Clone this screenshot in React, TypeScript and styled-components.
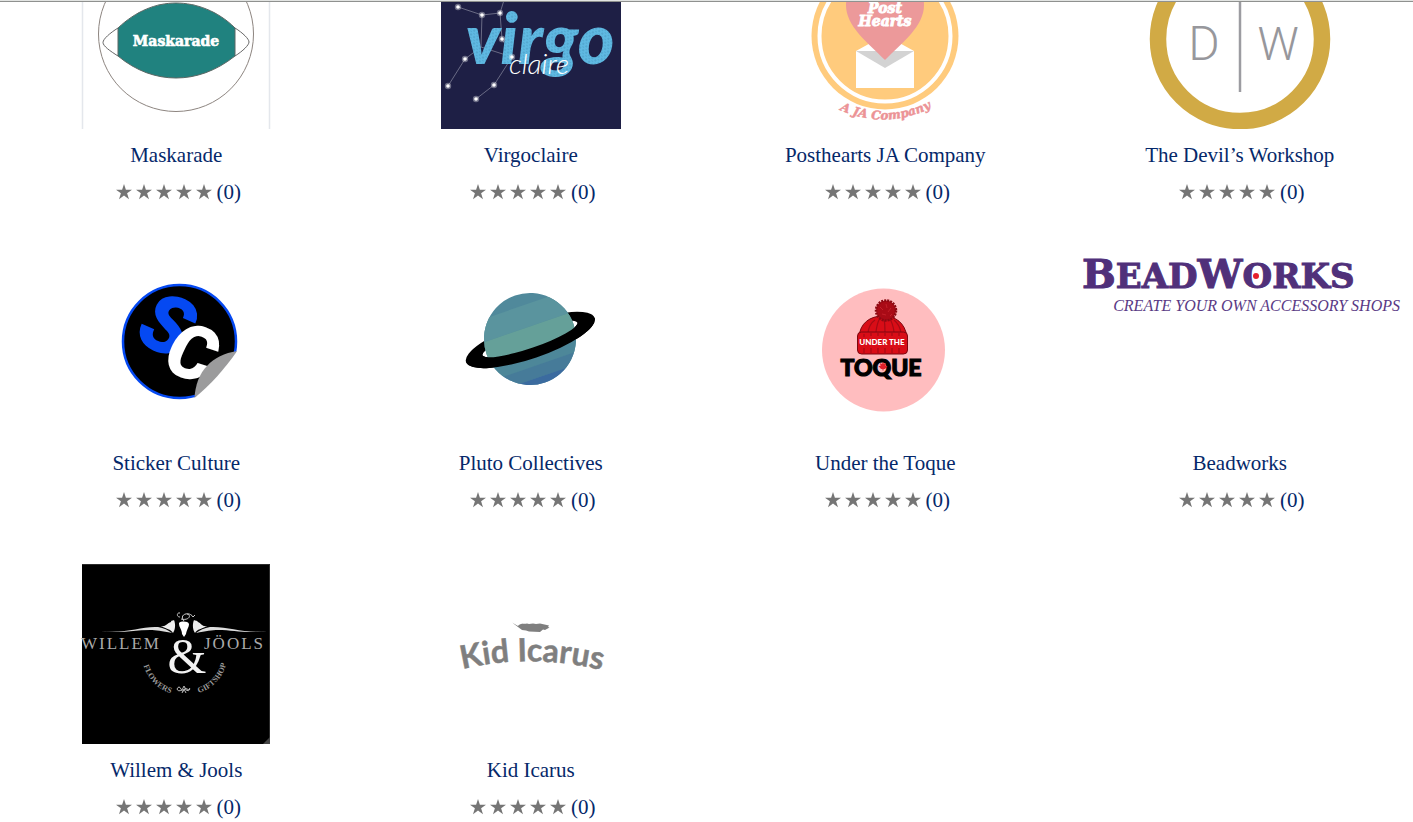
import React from "react";
import styled, { createGlobalStyle } from "styled-components";

const GlobalStyle = createGlobalStyle`
  * { box-sizing: border-box; }
  body {
    margin: 0;
    background: #ffffff;
    color: #05286a;
    font-family: "Liberation Serif", "Times New Roman", serif;
  }
`;

const Page = styled.div`
  overflow: hidden;
`;

const TopEdge = styled.header`
  height: 2px;
  background: #e2e4e2;
  border-bottom: 1px solid #8f918f;
`;

const Viewport = styled.main`
  overflow: hidden;
`;

/* The list is scrolled, so its first row starts above the visible area. */
const VendorGrid = styled.ul`
  display: grid;
  grid-template-columns: repeat(4, minmax(0, 1fr));
  grid-template-rows: minmax(308px, auto) minmax(307px, auto) auto;
  margin: -53px -4px 0 -1px;
  padding: 0;
  list-style: none;
`;

const Vendor = styled.li`
  display: flex;
  flex-direction: column;
  align-items: center;
`;

const VendorLink = styled.a`
  display: flex;
  flex-direction: column;
  align-items: center;
  gap: 11px;
  color: inherit;
  text-decoration: none;
`;

const Art = styled.svg`
  display: block;
  width: 336px;
  height: 180px;
`;

const Name = styled.span`
  font-size: 21px;
  line-height: 30px;
`;

const Rating = styled.div`
  display: flex;
  align-items: center;
  gap: 5px;
  margin-top: 7px;
  padding-left: 4px;
  font-size: 21px;
  line-height: 30px;
`;

const Stars = styled.span`
  display: flex;
  gap: 4px;
`;

const StarIcon = styled.svg`
  width: 16px;
  height: 16px;
  fill: #757575;
`;

const serifBlack = '"DejaVu Serif", serif';
const serif = '"Liberation Serif", serif';

const Logo = ({ title, children }: { title: string; children: React.ReactNode }) => (
  <Art viewBox="-168 0 336 180" role="img" aria-label={title}>
    {children}
  </Art>
);

const Maskarade = () => (
  <Logo title="Maskarade logo">
    <path d="M-93.500 0V180M93.500 0V180" stroke="#e4e7ec" strokeWidth="1.500" />
    <circle cx="0" cy="85" r="77.500" fill="#fff" stroke="#8d8580" />
    <path d="M-58 79C-66 84-73 90-73 93.500S-66 102-58 107M59 79C67 84 73 90 73 93S67 102 59 107" fill="none" stroke="#666" />
    <path d="M-58 79C-40 62-20 54 0 54S42 62 59 79V107C40 122 20 129 0 129S-40 122-58 107Z" fill="#20827f" stroke="#5b6764" />
    <text x="0" y="97" textAnchor="middle" fontFamily={serifBlack} fontWeight="700" fontSize="14" fill="#fff" stroke="#fff" strokeWidth="0.600">Maskarade</text>
  </Logo>
);

const starNodes = [[-73, 58], [-49, 66], [-31, 64], [-29, 90], [-66, 110], [-83, 137], [-19, 108], [-37, 136], [-55, 150]];

const Virgoclaire = () => (
  <Logo title="Virgoclaire logo">
    <defs>
      <pattern id="brush" width="5" height="4" patternUnits="userSpaceOnUse" patternTransform="rotate(-50)">
        <rect width="5" height="4" fill="#5fb9e2" />
        <path d="M0 1h2M3 3h1" stroke="#397fa8" strokeWidth="0.600" />
      </pattern>
    </defs>
    <rect x="-90" width="180" height="180" fill="#1e1f45" />
    <path d="M-73 58L-49 66L-31 64L-26 48M-49 66L-50 98L-19 108M-31 64L-29 90L-19 108L-37 136L-55 150M-50 98L-66 110L-83 137" fill="none" stroke="#7c7d94" strokeWidth="0.800" />
    <text x="9" y="115" textAnchor="middle" fontFamily="Lato, sans-serif" fontWeight="900" fontStyle="italic" fontSize="70" fill="url(#brush)">virgo</text>
    {starNodes.map(([x, y]) => (
      <g key={`${x},${y}`} fill="#fff">
        <circle cx={x} cy={y} r="3.200" opacity="0.350" />
        <circle cx={x} cy={y} r="1.800" />
      </g>
    ))}
    <text x="8" y="125" textAnchor="middle" fontFamily="Lato, sans-serif" fontWeight="300" fontStyle="italic" fontSize="28" fill="#fff">claire</text>
  </Logo>
);

const Posthearts = () => (
  <Logo title="Posthearts JA Company logo">
    <circle cx="0" cy="87" r="73.500" fill="#ffcb7d" />
    <circle cx="0" cy="87" r="65.500" fill="none" stroke="#fff" strokeWidth="4" />
    <path d="M-29 102L0 86L29 102V139H-29Z" fill="#fff" />
    <path d="M-29 102H29L0 119Z" fill="#d3d3d3" />
    <path d="M0 111C-18 93-39 77-39 56C-39 34-12 28 0 44C12 28 39 34 39 56C39 77 18 93 0 111Z" fill="#ec999a" />
    <g fontFamily={serifBlack} fontWeight="700" fontStyle="italic" fill="#fff" stroke="#fff" strokeWidth="0.900" fontSize="14" textAnchor="middle">
      <text x="0" y="64">Post</text>
      <text x="0" y="77">Hearts</text>
    </g>
    <path id="hearts-curve" d="M-45 161Q0 181 46 159" fill="none" />
    <text fontFamily={serifBlack} fontWeight="700" fontStyle="italic" fontSize="12" fill="#ec9396" stroke="#ec9396" strokeWidth="0.500" textAnchor="middle">
      <textPath href="#hearts-curve" startOffset="50%">A JA Company</textPath>
    </text>
  </Logo>
);

const DevilsWorkshop = () => (
  <Logo title="The Devil’s Workshop logo">
    <circle cx="0" cy="90" r="82" fill="#fff" stroke="#d1aa45" strokeWidth="16.500" />
    <path d="M0 30V143" stroke="#9c9ca1" strokeWidth="2.500" />
    <g fontFamily="Roboto, sans-serif" fontWeight="300" fill="#97979c" textAnchor="middle">
      <text x="-36" y="111" fontSize="48">D</text>
      <text x="38" y="111" fontSize="46">W</text>
    </g>
  </Logo>
);

const StickerCulture = () => (
  <Logo title="Sticker Culture logo">
    <circle cx="3.500" cy="84.500" r="56.500" fill="#000" stroke="#0549f2" strokeWidth="2.500" />
    <g fontFamily="Roboto, sans-serif" fontWeight="900" fontStyle="italic" fontSize="82" textAnchor="middle">
      <text transform="translate(-9 68) rotate(24)" y="28" fill="#0549f2">S</text>
      <text transform="translate(16 95) rotate(18)" y="27" fontSize="76" fill="#fff">C</text>
    </g>
    <path d="M62 93L64 150H17L18.500 141Z" fill="#fff" />
    <path d="M61 94C36 98 20 114 18.500 141C34 128 49 112 61 94Z" fill="#9b9b9c" />
  </Logo>
);

const ringPath = "M-68 0A68 18.500 0 1 0 68 0A68 18.500 0 1 0-68 0ZM-50-1A50 9 0 1 1 50-1A50 9 0 1 1-50-1Z";

const PlutoCollectives = () => (
  <Logo title="Pluto Collectives logo">
    <defs>
      <clipPath id="planet"><circle r="46" /></clipPath>
      <clipPath id="front"><rect x="-70" y="0" width="140" height="24" /></clipPath>
    </defs>
    <g transform="translate(-1 82) rotate(-19)">
      <g transform="translate(0 1)">
        <path d={ringPath} fillRule="evenodd" />
      </g>
      <g clipPath="url(#planet)">
        <rect x="-50" y="-50" width="100" height="100" fill="#50899b" />
        <rect x="-50" y="-34" width="100" height="22" fill="#5a949e" />
        <rect x="-50" y="-12" width="100" height="26" fill="#65a099" />
        <rect x="-50" y="14" width="100" height="13" fill="#4d8799" />
        <rect x="-50" y="27" width="100" height="12" fill="#467b99" />
        <rect x="-50" y="39" width="100" height="12" fill="#3b6b9f" />
      </g>
      <g transform="translate(0 1)">
        <path d={ringPath} fillRule="evenodd" clipPath="url(#front)" />
      </g>
    </g>
  </Logo>
);

const UnderTheToque = () => (
  <Logo title="Under the Toque logo">
    <circle cx="-1.500" cy="93" r="61.500" fill="#ffbdbf" />
    <path d="M-26 80C-25 66-15 59-2 59S20 66 22 80Z" fill="#d90d17" stroke="#7c0710" />
    <path d="M-17 76Q-16 67-10 63M-9 75Q-8 66-5 61M0 75Q0 67-1 61M9 75Q8 66 4 61M16 76Q15 68 9 63" fill="none" stroke="#a50a14" strokeWidth="1.200" />
    <circle cx="1" cy="53.500" r="10" fill="#a90b16" stroke="#8b0912" strokeWidth="2.500" strokeDasharray="2 1" />
    <path d="M-5 50L-2 53M1 47L2 51M6 51L3 55M-3 57L1 58M5 59L7 57" stroke="#c41f29" />
    <rect x="-27.500" y="75" width="50" height="22" rx="4" fill="#d90d17" stroke="#7c0710" />
    <path d="M-21 77V80M-14 76V79M-7 76V79M0 76V79M7 76V79M14 76V79M-21 91V96M-14 91V96M-7 91V96M0 91V96M7 91V96M14 91V96" stroke="#a50a14" strokeWidth="1.200" />
    <text x="-3" y="88" textAnchor="middle" fontFamily="Lato, sans-serif" fontWeight="900" fontSize="8" fill="#fff">UNDER THE</text>
    <text x="-4" y="119" textAnchor="middle" fontFamily="Lato, sans-serif" fontWeight="900" fontSize="23" stroke="#000" strokeWidth="1.200">TOQUE</text>
    <path d="M-2 105L-1 107L1 106L0.500 109L2.500 109L0 112H-1.500V113.500H-2.500V112H-4L-6.500 109L-4.500 109L-5 106L-3 107Z" fill="#e0202a" />
  </Logo>
);

const Beadworks = () => (
  <Logo title="Beadworks logo">
    <text x="-158" y="31" fontFamily={serifBlack} fontWeight="700" fontSize="40" fill="#50307a" stroke="#50307a" strokeWidth="1">
      B<tspan fontSize="34">EAD</tspan>W<tspan fontSize="34">ORKS</tspan>
    </text>
    <circle cx="16" cy="19" r="3" fill="#e5202c" />
    <text x="160" y="54" textAnchor="end" fontFamily={serif} fontStyle="italic" fontSize="16" fill="#5a3a85">CREATE YOUR OWN ACCESSORY SHOPS</text>
  </Logo>
);

const WillemJools = () => (
  <Logo title="Willem & Jools logo">
    <rect x="-94" width="188" height="180" fill="#000" />
    <path d="M93.500 0V180M-94 0.500H94" stroke="#2b2b2b" />
    <path d="M94 173V180H87Z" fill="#444" />
    <path d="M-75 67C-50 70-35 62-18 63C-12 64-8 66-4 69C-14 67-20 66-26 66C-42 66-55 70-75 67ZM91 67C68 70 52 62 34 63C28 64 24 66 20 69C30 67 36 66 42 66C58 66 70 70 91 67Z" fill="#ddd" />
    <path d="M-15 62C-10 63-9 59-5 58C-5 56-3 57-2 56C0 61-1 66-3 69C-5 65-10 65-15 62ZM31 62C26 63 25 59 22 58C21 56 19 57 18 56C16 61 17 66 19 69C21 65 26 65 31 62Z" fill="#eee" />
    <path d="M3 59C5 57 12 57 13 60C13 63 11 65 10 70L8 73L6 70C6 65 3 64 3 59Z" fill="#fff" />
    <path d="M8 57C2 50 14 47 17 53M5 55C13 57 16 51 11 50M4 53C0 53 1 48 4 49M17 53L19 51" fill="none" stroke="#ccc" />
    <g fontFamily={serif} fontSize="17" fill="#aaa" letterSpacing="2">
      <text x="-95" y="85">WILLEM</text>
      <text x="28" y="85">JÖOLS</text>
    </g>
    <text x="11" y="109" textAnchor="middle" fontFamily={serif} fontSize="50" fill="#f2f2f2">&amp;</text>
    <path id="flowers-curve" d="M-33 99A41 41 0 0 0-3 130" fill="none" />
    <path id="gift-curve" d="M19 130A41 41 0 0 0 51 96" fill="none" />
    <g fontFamily={serif} fontSize="8" fontWeight="700" fill="#999" textAnchor="middle">
      <text><textPath href="#flowers-curve" startOffset="50%">FLOWERS</textPath></text>
      <text><textPath href="#gift-curve" startOffset="50%">GIFTSHOP</textPath></text>
    </g>
    <path d="M1 125Q3 121 5 125T8 126T11 125T14 124M1 125Q2 128 6 126L8 122L10 126Q13 128 14 125M6 129L8 125L10 129" fill="none" stroke="#bbb" />
  </Logo>
);

const KidIcarus = () => (
  <Logo title="Kid Icarus logo">
    <path d="M-19 58.500L-13 62C-11 59-7 60-4 59.500L-2 60L2 59.500L5 60L9 59.500L18 61.500L17 63L18.500 63.500L14 66L12 65.500L9 68L-2 67.500L-5 66.500L-9 66L-13 63Z" fill="#7f7f7f" />
    <path id="kid-curve" d="M-72 106Q0 88 74 107" fill="none" />
    <text fontFamily="Lato, sans-serif" fontWeight="700" fontSize="32" fill="#7f7f7f" stroke="#7f7f7f" strokeWidth="0.500" textAnchor="middle">
      <textPath href="#kid-curve" startOffset="50%">Kid Icarus</textPath>
    </text>
  </Logo>
);

const vendors = [
  { name: "Maskarade", Picture: Maskarade },
  { name: "Virgoclaire", Picture: Virgoclaire },
  { name: "Posthearts JA Company", Picture: Posthearts },
  { name: "The Devil’s Workshop", Picture: DevilsWorkshop },
  { name: "Sticker Culture", Picture: StickerCulture },
  { name: "Pluto Collectives", Picture: PlutoCollectives },
  { name: "Under the Toque", Picture: UnderTheToque },
  { name: "Beadworks", Picture: Beadworks },
  { name: "Willem & Jools", Picture: WillemJools },
  { name: "Kid Icarus", Picture: KidIcarus },
];

const Star = () => (
  <StarIcon viewBox="0 0 16 16" aria-hidden="true">
    <path d="M8 0L9.900 5.800H16L11.100 9.300L13 15.200L8 11.600L3 15.200L4.900 9.300L0 5.800H6.100Z" />
  </StarIcon>
);

export default function App() {
  return (
    <Page>
      <GlobalStyle />
      <TopEdge />
      <Viewport>
        <VendorGrid>
          {vendors.map(({ name, Picture }) => (
            <Vendor key={name}>
              <VendorLink href="#">
                <Picture />
                <Name>{name}</Name>
              </VendorLink>
              <Rating>
                <Stars role="img" aria-label="0 out of 5 stars">
                  {[1, 2, 3, 4, 5].map((n) => <Star key={n} />)}
                </Stars>
                <span>(0)</span>
              </Rating>
            </Vendor>
          ))}
        </VendorGrid>
      </Viewport>
    </Page>
  );
}
